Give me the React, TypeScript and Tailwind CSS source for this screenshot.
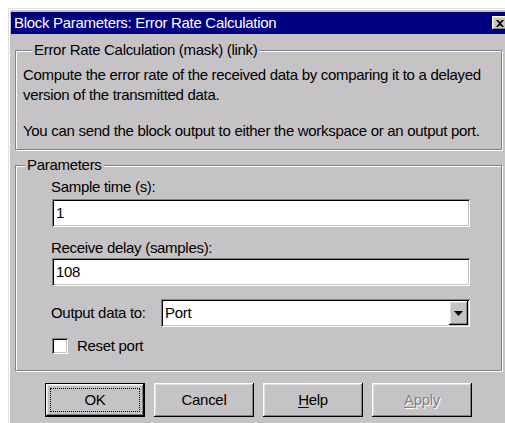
import React from "react";

const raised =
  "bg-[#c6c3c6] shadow-[inset_-1px_-1px_0_#000,inset_1px_1px_0_#fff,inset_-2px_-2px_0_#848284,inset_2px_2px_0_#dfdfdf]";
const sunken =
  "bg-white shadow-[inset_1px_1px_0_#848284,inset_-1px_-1px_0_#fff,inset_2px_2px_0_#000,inset_-2px_-2px_0_#c6c3c6]";
const group =
  "w-[487px] border border-[#848284] shadow-[inset_1px_1px_0_#fff,1px_1px_0_#fff]";

function Field({ value }: { value: string }) {
  return (
    <div className={`${sunken} w-[418px] h-[28px] flex items-center pl-[4px] text-[15px]`}>
      {value}
    </div>
  );
}

function Button({
  children,
  isDefault,
}: {
  children: React.ReactNode;
  isDefault?: boolean;
}) {
  if (isDefault) {
    return (
      <div className="w-[100px] h-[34px] border border-black">
        <div className={`${raised} w-full h-full p-[4px]`}>
          <div className="w-full h-full border border-dotted border-black flex items-center justify-center">
            {children}
          </div>
        </div>
      </div>
    );
  }
  return (
    <div className={`${raised} w-[100px] h-[34px] flex items-center justify-center`}>
      {children}
    </div>
  );
}

export default function App() {
  return (
    <div className="w-[505px] h-[423px] overflow-hidden bg-white pl-[8px] pt-[8px] font-['Liberation_Sans',Arial,sans-serif] text-[15px] text-black leading-[18px]">
      <div className="w-[520px] h-[440px] bg-[#c6c3c6] border-t border-l border-[#dfdfdf]">
        <div className="h-full border-t border-l border-white pt-[2px] pl-[1px]">
          {/* caption bar */}
          <div className="w-[499px] h-[22px] bg-[#000080] flex items-center justify-between pl-[3px] pr-[2px]">
            <span className="text-white text-[15px] tracking-[-0.3px]">
              Block Parameters: Error Rate Calculation
            </span>
            <div className={`${raised} w-[16px] h-[14px] flex items-center justify-center`}>
              <svg width="8" height="7" viewBox="0 0 8 7">
                <path
                  d="M0 0h2l2 2 2-2h2L5 3.5 8 7H6L4 5 2 7H0l3-3.5z"
                  fill="#000"
                />
              </svg>
            </div>
          </div>

          <div className="pl-[4px] pt-[7px]">
            {/* mask description */}
            <fieldset className={`${group} h-[109px] px-[7px] pb-0`}>
              <legend className="ml-[9px] px-[2px] bg-[#c6c3c6] tracking-[-0.3px]">
                Error Rate Calculation (mask) (link)
              </legend>
              <div className="pt-[6px] leading-[20px] tracking-[-0.3px] whitespace-nowrap">
                <p>Compute the error rate of the received data by comparing it to a delayed</p>
                <p>version of the transmitted data.</p>
                <p className="mt-[16px]">
                  You can send the block output to either the workspace or an output port.
                </p>
              </div>
            </fieldset>

            {/* parameters */}
            <fieldset className={`${group} mt-[6px] pl-[36px] pb-[15px]`}>
              <legend className="-ml-[27px] px-[2px] bg-[#c6c3c6] tracking-[-0.3px]">
                Parameters
              </legend>
              <div className="flex flex-col tracking-[-0.3px]">
                <span className="mt-[4px] -ml-[1px]">Sample time (s):</span>
                <div className="mt-[3px]">
                  <Field value="1" />
                </div>
                <span className="mt-[12px] -ml-[1px]">Receive delay (samples):</span>
                <div className="mt-[1px]">
                  <Field value="108" />
                </div>
                <div className="mt-[13px] flex items-center -ml-[1px]">
                  <span className="w-[110px]">Output data to:</span>
                  <div className={`${sunken} w-[309px] h-[28px] flex items-center justify-between pl-[4px] pr-[2px]`}>
                    <span>Port</span>
                    <div className={`${raised} w-[19px] h-[24px] flex items-center justify-center`}>
                      <svg width="9" height="5" viewBox="0 0 9 5">
                        <path d="M0 0h9L4.5 5z" fill="#000" />
                      </svg>
                    </div>
                  </div>
                </div>
                <div className="mt-[10px] flex items-center gap-[9px]">
                  <div className={`${sunken} w-[16px] h-[16px]`} />
                  <span>Reset port</span>
                </div>
              </div>
            </fieldset>

            {/* dialog buttons */}
            <div className="mt-[12px] pl-[30px] flex gap-[9px] tracking-[-0.3px]">
              <Button isDefault>OK</Button>
              <Button>Cancel</Button>
              <Button>
                <span>
                  <span className="underline underline-offset-2">H</span>elp
                </span>
              </Button>
              <Button>
                <span className="text-[#848284] [text-shadow:1px_1px_0_#fff]">
                  <span className="underline underline-offset-2">A</span>pply
                </span>
              </Button>
            </div>
          </div>
        </div>
      </div>
    </div>
  );
}
